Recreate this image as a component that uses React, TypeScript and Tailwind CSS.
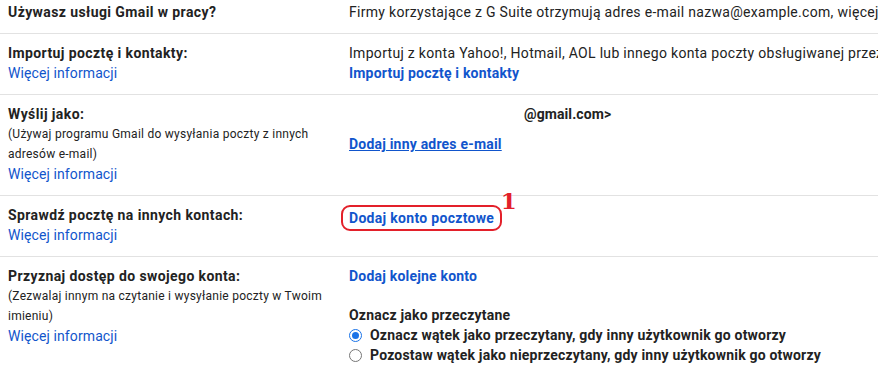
const link = "text-[#1155cc]";

function Row({
  label,
  children,
  className = "",
}: {
  label: React.ReactNode;
  children: React.ReactNode;
  className?: string;
}) {
  return (
    <div
      className={`grid grid-cols-[341px_1fr] border-b border-[#e2e2e2] pb-[11px] pt-[9px] ${className}`}
    >
      <div className="pl-2">{label}</div>
      <div className="whitespace-nowrap pl-2">{children}</div>
    </div>
  );
}

function More() {
  return <div className={`${link} tracking-[0.1px]`}>Więcej informacji</div>;
}

function Radio({ checked, label }: { checked?: boolean; label: string }) {
  return (
    <label className="flex items-center gap-[8px] font-bold tracking-[0.2px]">
      <span
        className={`flex h-[13px] w-[13px] items-center justify-center rounded-full border ${
          checked ? "border-[#1a73e8]" : "border-[#767676]"
        }`}
      >
        {checked && <span className="h-[7px] w-[7px] rounded-full bg-[#1a73e8]" />}
      </span>
      {label}
    </label>
  );
}

export default function App() {
  return (
    <div className="h-[371px] w-[878px] overflow-hidden bg-white font-['Roboto',sans-serif] text-[14px] leading-[20px] tracking-[0.3px] text-[#222]">
      <Row label={<div className="font-bold tracking-[0.4px]">Używasz usługi Gmail w pracy?</div>} className="!pt-[2px]">
        Firmy korzystające z G Suite otrzymują adres e-mail nazwa@example.com, więcej informacji
      </Row>

      <Row
        label={
          <>
            <div className="font-bold tracking-[0.4px]">Importuj pocztę i kontakty:</div>
            <More />
          </>
        }
      >
        <div>
          Importuj z konta Yahoo!, Hotmail, AOL lub innego konta poczty obsługiwanej przez POP3 lub IMAP.
        </div>
        <div className={`${link} font-bold tracking-[0.2px]`}>Importuj pocztę i kontakty</div>
      </Row>

      <Row
        label={
          <>
            <div className="font-bold tracking-[0.4px]">Wyślij jako:</div>
            <div className="text-[12px] leading-[20px] tracking-[0.25px]">
              (Używaj programu Gmail do wysyłania poczty z innych
              <br />
              adresów e-mail)
            </div>
            <More />
          </>
        }
      >
        <div className="pl-[175px] font-bold tracking-[0.1px]">@gmail.com&gt;</div>
        <div className={`${link} mt-[10px] font-bold tracking-[0.2px] underline`}>Dodaj inny adres e-mail</div>
      </Row>

      <Row
        label={
          <>
            <div className="font-bold tracking-[0.4px]">Sprawdź pocztę na innych kontach:</div>
            <More />
          </>
        }
      >
        <span className="relative -ml-[8px] inline-block rounded-[9px] border-2 border-[#e3202a] px-[6px] py-[1px] leading-[20px]">
          <span className={`${link} font-bold tracking-[0.3px]`}>Dodaj konto pocztowe</span>
          <span className="absolute -right-[17px] -top-[18px] font-['DejaVu_Serif',serif] text-[23px] font-bold leading-[23px] text-[#e3202a]">
            1
          </span>
        </span>
      </Row>

      <Row
        label={
          <>
            <div className="font-bold tracking-[0.4px]">Przyznaj dostęp do swojego konta:</div>
            <div className="text-[12px] leading-[20px] tracking-[0.25px]">
              (Zezwalaj innym na czytanie i wysyłanie poczty w Twoim
              <br />
              imieniu)
            </div>
            <More />
          </>
        }
        className="border-b-0"
      >
        <div className={`${link} font-bold tracking-[0.2px]`}>Dodaj kolejne konto</div>
        <div className="mt-[19px] font-bold tracking-[0.2px]">Oznacz jako przeczytane</div>
        <Radio checked label="Oznacz wątek jako przeczytany, gdy inny użytkownik go otworzy" />
        <Radio label="Pozostaw wątek jako nieprzeczytany, gdy inny użytkownik go otworzy" />
      </Row>
    </div>
  );
}
